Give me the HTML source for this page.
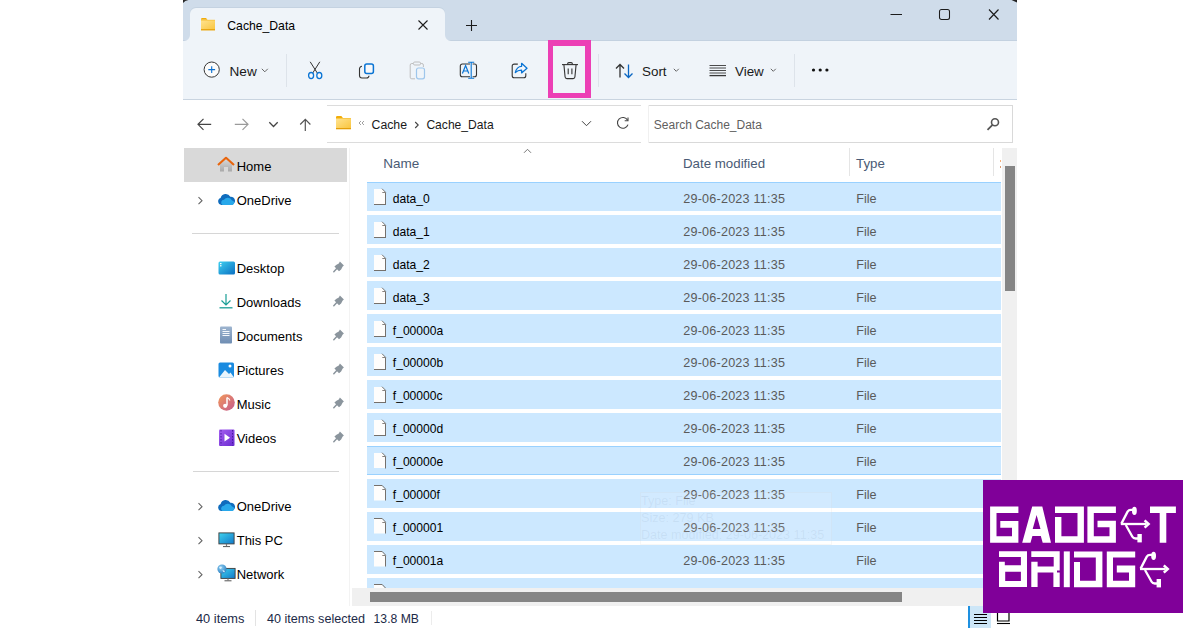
<!DOCTYPE html>
<html><head><meta charset="utf-8">
<style>
*{margin:0;padding:0;box-sizing:border-box}
html,body{width:1200px;height:628px;overflow:hidden;background:#fff;font-family:"Liberation Sans",sans-serif;color:#1a1a1a}
.a{position:absolute;white-space:nowrap}
svg{position:absolute;overflow:visible}
</style></head><body>
<div class="a" style="left:183px;top:0;width:834px;height:40px;background:#cfdcea"></div>
<div class="a" style="left:183px;top:40px;width:834px;height:59px;background:#eff4f9"></div>
<div class="a" style="left:183px;top:40px;width:834px;height:1px;background:#c3d1e0"></div>
<svg style="left:1011px;top:0px" width="7" height="3"><path d="M0.5 0 H6 V2.5 Z" fill="#222"/></svg>
<div class="a" style="left:183px;top:99px;width:834px;height:1px;background:#c9d4e0"></div>
<svg style="left:183px;top:0px" width="7" height="4"><path d="M0 0 H5.4 Q2 0.6 0 2.9Z" fill="#2a2a2a"/></svg>
<div class="a" style="left:190px;top:8px;width:255px;height:33px;background:#eff4f9;border-radius:6px 6px 0 0;box-shadow:0 -1px 0 #c4d2e1"></div>
<svg style="left:184px;top:35px" width="6" height="6"><path d="M0 6 L6 6 L6 0 A6 6 0 0 1 0 6Z" fill="#eff4f9"/></svg>
<svg style="left:445px;top:35px" width="6" height="6"><path d="M0 0 A6 6 0 0 0 6 6 L0 6Z" fill="#eff4f9"/></svg>
<svg style="left:201px;top:18px" width="15" height="13" viewBox="0 0 15 13">
<path d="M0 1.2 Q0 0 1.2 0 H5 L6.5 1.8 H0Z" fill="#f2ad0a"/>
<rect x="0" y="1.8" width="14" height="10.5" fill="#f7c33e"/>
<rect x="0" y="2.6" width="14" height="8.6" fill="url(#fg1)"/>
<rect x="0" y="11.2" width="14" height="1.1" fill="#e49e0a"/>
<defs><linearGradient id="fg1" x1="0" y1="0" x2="1" y2="1"><stop offset="0" stop-color="#ffe28e"/><stop offset="1" stop-color="#f9c640"/></linearGradient></defs>
</svg>
<div class="a" style="left:227.3px;top:19.57px;font-size:12.2px;line-height:12.2px;color:#000;">Cache_Data</div>
<svg style="left:417px;top:19px" width="12" height="12"><path d="M1.5 1.5 L10.5 10.5 M10.5 1.5 L1.5 10.5" stroke="#1c1c1c" stroke-width="1.1"/></svg>
<svg style="left:465px;top:19px" width="13" height="13"><path d="M6.5 1 V12 M1 6.5 H12" stroke="#1c1c1c" stroke-width="1.1"/></svg>
<svg style="left:890px;top:13px" width="13" height="3"><path d="M0.5 1.5 H12" stroke="#1c1c1c" stroke-width="1"/></svg>
<svg style="left:938px;top:8px" width="13" height="13"><rect x="1.5" y="1.5" width="10" height="10" rx="2" fill="none" stroke="#1c1c1c" stroke-width="1.05"/></svg>
<svg style="left:987px;top:8px" width="13" height="13"><path d="M2 1.5 L11.5 11.5 M11.5 1.5 L2 11.5" stroke="#1c1c1c" stroke-width="1.15"/></svg>
<svg style="left:203px;top:61px" width="18" height="18"><circle cx="8.7" cy="8.6" r="7.6" fill="#fbfbfb" stroke="#383838" stroke-width="1"/><path d="M8.7 5.2 V12 M5.3 8.6 H12.1" stroke="#0a6fd0" stroke-width="1.1"/></svg>
<div class="a" style="left:229.5px;top:64.89px;font-size:13.6px;line-height:13.6px;color:#1a1a1a;">New</div>
<svg style="left:261px;top:68px" width="8" height="5"><path d="M0.8 0.8 L3.8 3.8 L6.8 0.8" fill="none" stroke="#555" stroke-width="0.9"/></svg>
<div class="a" style="left:286px;top:54px;width:1px;height:33px;background:#dde3ea"></div>
<div class="a" style="left:598px;top:54px;width:1px;height:33px;background:#dde3ea"></div>
<div class="a" style="left:794px;top:54px;width:1px;height:33px;background:#dde3ea"></div>
<svg style="left:307px;top:61px" width="17" height="19"><path d="M3.2 0.8 L10.4 12.2 M12.8 0.8 L5.6 12.2" stroke="#333" stroke-width="1"/><ellipse cx="4.1" cy="14.6" rx="2.5" ry="3.1" fill="#f4f7fa" stroke="#0a74d4" stroke-width="1.3"/><ellipse cx="12.3" cy="14.6" rx="2.5" ry="3.1" fill="#f4f7fa" stroke="#0a74d4" stroke-width="1.3"/></svg>
<svg style="left:358px;top:62px" width="18" height="18"><rect x="6.8" y="1.9" width="8.6" height="9.6" rx="2" fill="#f7f8fa" stroke="#0a74d4" stroke-width="1.5"/><path d="M4 4.3 A2.5 2.5 0 0 0 1.5 6.8 V13.5 A2.5 2.5 0 0 0 4 16 H8.5 A2.5 2.5 0 0 0 11 13.7" fill="none" stroke="#333" stroke-width="1.1"/></svg>
<svg style="left:409px;top:61px" width="18" height="19"><path d="M4 2.5 H2.8 A1.6 1.6 0 0 0 1.2 4.1 V16.2 A1.6 1.6 0 0 0 2.8 17.8 H6" fill="none" stroke="#bdbdbd" stroke-width="1"/><rect x="4.5" y="1" width="7" height="3" rx="1.2" fill="none" stroke="#bdbdbd" stroke-width="1"/><path d="M11.5 2.5 H12.8 A1.6 1.6 0 0 1 14.4 4.1 V6" fill="none" stroke="#bdbdbd" stroke-width="1"/><rect x="7.5" y="7" width="8" height="10.8" rx="2" fill="none" stroke="#9ec6ec" stroke-width="1.2"/></svg>
<svg style="left:459px;top:61px" width="20" height="19"><path d="M11 3 H3.3 A2 2 0 0 0 1.3 5 V13.7 A2 2 0 0 0 3.3 15.7 H11" fill="none" stroke="#333" stroke-width="1.1"/><path d="M13.6 3 H15.5 A2 2 0 0 1 17.5 5 V13.7 A2 2 0 0 1 15.5 15.7 H13.6" fill="none" stroke="#333" stroke-width="1.1"/><path d="M3.4 12.4 L6.6 4.6 L9.8 12.4 M4.5 10 H8.7" fill="none" stroke="#0a74d4" stroke-width="1.2"/><path d="M12.2 1.3 V17.3 M9.2 1.3 H15.2 M9.2 17.3 H15.2" stroke="#0a74d4" stroke-width="1.1"/></svg>
<svg style="left:511px;top:62px" width="18" height="17"><path d="M6.8 2.1 H3.2 A2 2 0 0 0 1.2 4.1 V13.7 A2 2 0 0 0 3.2 15.7 H12.8 A2 2 0 0 0 14.8 13.7 V11.2" fill="none" stroke="#333" stroke-width="1.1"/><path d="M4.3 10.6 C5 7.2 7.5 4.3 10.6 4.3 V1.3 L16 6.2 L10.6 10.9 V8.2 C8 8.1 6 9 4.3 10.6Z" fill="#f6f8fb" stroke="#0a74d4" stroke-width="1.3" stroke-linejoin="round"/></svg>
<svg style="left:561px;top:61px" width="19" height="19"><path d="M1 3.6 H17" stroke="#333" stroke-width="1.1"/><path d="M6.6 3.5 V2.9 A1.3 1.3 0 0 1 7.9 1.6 H10.1 A1.3 1.3 0 0 1 11.4 2.9 V3.5" fill="none" stroke="#333" stroke-width="1.1"/><path d="M2.9 3.6 L4.1 16 A1.8 1.8 0 0 0 5.9 17.6 H12.1 A1.8 1.8 0 0 0 13.9 16 L15.1 3.6" fill="none" stroke="#333" stroke-width="1.1"/><path d="M7.2 7.6 V13.2 M10.9 7.6 V13.2" stroke="#333" stroke-width="1.1"/></svg>
<div class="a" style="left:548px;top:40px;width:43px;height:58px;border-style:solid;border-color:#ec3fb5;border-width:6px 6px 5px 5px"></div>
<svg style="left:615px;top:63px" width="20" height="16"><path d="M5 14.5 V1.5 M1 5.5 L5 1.5 L9 5.5" fill="none" stroke="#333" stroke-width="1.3"/><path d="M13.5 1.5 V14.5 M9.5 10.5 L13.5 14.5 L17.5 10.5" fill="none" stroke="#0a66c2" stroke-width="1.3"/></svg>
<div class="a" style="left:642px;top:65.06px;font-size:13.4px;line-height:13.4px;color:#1a1a1a;">Sort</div>
<svg style="left:673px;top:68px" width="8" height="5"><path d="M0.8 0.8 L3.3 3.3 L5.8 0.8" fill="none" stroke="#555" stroke-width="0.9"/></svg>
<svg style="left:709px;top:64px" width="18" height="13"><path d="M0.5 1.5 H17 M0.5 4 H17 M0.5 6.5 H17 M0.5 9 H17" stroke="#383838" stroke-width="0.9"/><path d="M0.5 11.6 H17" stroke="#383838" stroke-width="1.3"/></svg>
<div class="a" style="left:735px;top:65.06px;font-size:13.4px;line-height:13.4px;color:#1a1a1a;">View</div>
<svg style="left:770px;top:68px" width="8" height="5"><path d="M0.8 0.8 L3.3 3.3 L5.8 0.8" fill="none" stroke="#555" stroke-width="0.9"/></svg>
<svg style="left:810px;top:67px" width="20" height="6"><circle cx="3.5" cy="3" r="1.6" fill="#111"/><circle cx="10.2" cy="3" r="1.6" fill="#111"/><circle cx="16.9" cy="3" r="1.6" fill="#111"/></svg>
<svg style="left:196px;top:117px" width="17" height="15"><path d="M15.2 7.3 H2.2 M7.5 1.8 L2 7.3 L7.5 12.8" fill="none" stroke="#444" stroke-width="1.2"/></svg>
<svg style="left:233px;top:117px" width="17" height="15"><path d="M1.8 7.3 H14.8 M9.5 1.8 L15 7.3 L9.5 12.8" fill="none" stroke="#9a9a9a" stroke-width="1.2"/></svg>
<svg style="left:268px;top:121px" width="12" height="8"><path d="M1.3 1.3 L5.5 5.5 L9.7 1.3" fill="none" stroke="#444" stroke-width="1.3"/></svg>
<svg style="left:298px;top:117px" width="15" height="16"><path d="M7.3 14 V2.4 M2.2 7.5 L7.3 2.4 L12.4 7.5" fill="none" stroke="#555" stroke-width="1.2"/></svg>
<div class="a" style="left:327px;top:105px;width:314px;height:38px;border-top:1px solid #dcdcdc;border-bottom:1px solid #dcdcdc"></div>
<svg style="left:336px;top:116px" width="16" height="14" viewBox="0 0 15 13">
<path d="M0 1.2 Q0 0 1.2 0 H5 L6.5 1.8 H0Z" fill="#f2ad0a"/>
<rect x="0" y="1.8" width="14" height="10.5" fill="#f7c33e"/>
<rect x="0" y="2.6" width="14" height="8.6" fill="url(#fg1)"/>
<rect x="0" y="11.2" width="14" height="1.1" fill="#e49e0a"/>
</svg>
<svg style="left:358px;top:120px" width="7" height="6"><path d="M3 1 L1 3 L3 5 M6 1 L4 3 L6 5" fill="none" stroke="#888" stroke-width="0.8"/></svg>
<div class="a" style="left:371.5px;top:119.29px;font-size:12.3px;line-height:12.3px;color:#1a1a1a;">Cache</div>
<svg style="left:414px;top:121px" width="6" height="8"><path d="M1.2 1 L4.2 4 L1.2 7" fill="none" stroke="#444" stroke-width="1.1"/></svg>
<div class="a" style="left:426.4px;top:119.46px;font-size:12.1px;line-height:12.1px;color:#1a1a1a;">Cache_Data</div>
<svg style="left:581px;top:120px" width="12" height="8"><path d="M1 1.2 L5.5 5.7 L10 1.2" fill="none" stroke="#444" stroke-width="1"/></svg>
<svg style="left:616px;top:116px" width="14" height="15"><path d="M11.6 4.2 A5.4 5.4 0 1 0 12 8.6" fill="none" stroke="#444" stroke-width="1.1"/><path d="M12 1.5 V4.8 H8.7" fill="none" stroke="#444" stroke-width="1.1"/></svg>
<div class="a" style="left:648px;top:105px;width:365px;height:38px;border:1px solid #d9d9d9;border-left:none"></div>
<div class="a" style="left:648px;top:105px;width:1px;height:38px;background:#f0f0f0"></div>
<div class="a" style="left:653.8px;top:119.34px;font-size:12px;line-height:12px;color:#5f5f5f;">Search Cache_Data</div>
<svg style="left:986px;top:117px" width="15" height="15"><circle cx="9" cy="5.3" r="3.5" fill="none" stroke="#555" stroke-width="1.6"/><path d="M6.5 7.8 L1.5 12.8" stroke="#555" stroke-width="1.8"/></svg>
<div class="a" style="left:184px;top:148px;width:163px;height:34px;background:#d9d9d9"></div>
<div class="a" style="left:349px;top:148px;width:1px;height:458px;background:#f3f3f3"></div>
<div class="a" style="left:192px;top:233px;width:147px;height:1px;background:#d6d6d6"></div>
<div class="a" style="left:193px;top:471px;width:146px;height:1px;background:#d6d6d6"></div>
<svg style="left:217px;top:156.0px" width="19" height="17"><defs><linearGradient id="hg" x1="0" y1="0" x2="0" y2="1"><stop offset="0" stop-color="#d6d6d6"/><stop offset="1" stop-color="#a9a9a9"/></linearGradient></defs><path d="M3 8.5 L9 3.5 L15 8.5 V15.5 H11 V11 H7 V15.5 H3Z" fill="url(#hg)"/><path d="M1 9 L9 1.8 L17 9" fill="none" stroke="#e8650d" stroke-width="2.2" stroke-linejoin="round"/></svg>
<div class="a" style="left:236.7px;top:159.80px;font-size:13px;line-height:13px;color:#000;">Home</div>
<svg style="left:217px;top:193.3px" width="19" height="13"><path d="M4.5 12 A3.6 3.6 0 0 1 3.6 5 A5.2 5.2 0 0 1 13.3 3.8 A4 4 0 0 1 14.5 12Z" fill="#0f6cbd"/><path d="M5.5 12 A2.8 2.8 0 0 1 7 6.8 A4.5 4.5 0 0 1 15 7.5 A2.3 2.3 0 0 1 15.5 12Z" fill="#28a8ea"/></svg>
<div class="a" style="left:236.7px;top:193.80px;font-size:13px;line-height:13px;color:#000;">OneDrive</div>
<svg style="left:197px;top:195.8px" width="7" height="10"><path d="M1.5 1.2 L5 4.7 L1.5 8.2" fill="none" stroke="#666" stroke-width="1.1"/></svg>
<svg style="left:218px;top:261.0px" width="18" height="14"><defs><linearGradient id="dg" x1="0" y1="0" x2="1" y2="1"><stop offset="0" stop-color="#3fd0f0"/><stop offset="1" stop-color="#0a6fc2"/></linearGradient></defs><rect x="0.5" y="0.5" width="16.5" height="13" rx="1.5" fill="url(#dg)"/><rect x="2" y="2" width="1.5" height="1.2" fill="#fff"/><rect x="2" y="4.2" width="1.5" height="1.2" fill="#fff"/></svg>
<div class="a" style="left:236.7px;top:261.60px;font-size:13px;line-height:13px;color:#000;">Desktop</div>
<svg style="left:333px;top:261.0px" width="12" height="12"><path d="M6.9 0.6 L10.9 4.5 L9.7 5.5 L8.1 8.4 L6 10.3 L1.4 5.4 L3.5 3.8 L5.8 2.6 Z" fill="#8b959d"/><path d="M3.8 7.6 L0.8 10.8" stroke="#8b959d" stroke-width="1.5" stroke-linecap="round"/></svg>
<svg style="left:218px;top:293.0px" width="16" height="16"><path d="M8 1 V12 M3.5 7.5 L8 12 L12.5 7.5" fill="none" stroke="#1a9e96" stroke-width="1.2"/><path d="M1.5 14.8 H14.5" stroke="#1a9e96" stroke-width="1.3"/></svg>
<div class="a" style="left:236.7px;top:295.60px;font-size:13px;line-height:13px;color:#000;">Downloads</div>
<svg style="left:333px;top:295.0px" width="12" height="12"><path d="M6.9 0.6 L10.9 4.5 L9.7 5.5 L8.1 8.4 L6 10.3 L1.4 5.4 L3.5 3.8 L5.8 2.6 Z" fill="#8b959d"/><path d="M3.8 7.6 L0.8 10.8" stroke="#8b959d" stroke-width="1.5" stroke-linecap="round"/></svg>
<svg style="left:219px;top:326.0px" width="14" height="18"><defs><linearGradient id="docg" x1="0" y1="0" x2="0" y2="1"><stop offset="0" stop-color="#9db4cf"/><stop offset="1" stop-color="#6f8db3"/></linearGradient></defs><rect x="1" y="0.5" width="12" height="17" rx="1" fill="url(#docg)"/><path d="M3.5 3.5 H7 M3.5 5.5 H10.5 M3.5 7.5 H10.5 M3.5 9.5 H10.5" stroke="#f4f7fb" stroke-width="1"/></svg>
<div class="a" style="left:236.7px;top:329.60px;font-size:13px;line-height:13px;color:#000;">Documents</div>
<svg style="left:333px;top:329.0px" width="12" height="12"><path d="M6.9 0.6 L10.9 4.5 L9.7 5.5 L8.1 8.4 L6 10.3 L1.4 5.4 L3.5 3.8 L5.8 2.6 Z" fill="#8b959d"/><path d="M3.8 7.6 L0.8 10.8" stroke="#8b959d" stroke-width="1.5" stroke-linecap="round"/></svg>
<svg style="left:218px;top:362.0px" width="17" height="16"><rect x="0.5" y="0.5" width="15.5" height="15" rx="1.5" fill="#1a8be0"/><path d="M1 15.5 L7 8 L11 12 L12.5 10.5 L16 15.5Z" fill="#e8f4fc"/><circle cx="12" cy="4" r="1.5" fill="#fff"/></svg>
<div class="a" style="left:236.7px;top:363.60px;font-size:13px;line-height:13px;color:#000;">Pictures</div>
<svg style="left:333px;top:363.0px" width="12" height="12"><path d="M6.9 0.6 L10.9 4.5 L9.7 5.5 L8.1 8.4 L6 10.3 L1.4 5.4 L3.5 3.8 L5.8 2.6 Z" fill="#8b959d"/><path d="M3.8 7.6 L0.8 10.8" stroke="#8b959d" stroke-width="1.5" stroke-linecap="round"/></svg>
<svg style="left:218px;top:394.4px" width="18" height="18"><defs><linearGradient id="mg" x1="0" y1="0" x2="1" y2="1"><stop offset="0" stop-color="#f2995a"/><stop offset="1" stop-color="#c45a8e"/></linearGradient></defs><circle cx="8.5" cy="8.5" r="8.3" fill="url(#mg)"/><path d="M9 3.5 V11.5" stroke="#fff" stroke-width="1.5"/><path d="M9 3.5 Q11.5 4.5 11.8 6.5" fill="none" stroke="#fff" stroke-width="1.2"/><circle cx="7.2" cy="11.8" r="2.1" fill="#fff"/></svg>
<div class="a" style="left:236.7px;top:397.60px;font-size:13px;line-height:13px;color:#000;">Music</div>
<svg style="left:333px;top:397.0px" width="12" height="12"><path d="M6.9 0.6 L10.9 4.5 L9.7 5.5 L8.1 8.4 L6 10.3 L1.4 5.4 L3.5 3.8 L5.8 2.6 Z" fill="#8b959d"/><path d="M3.8 7.6 L0.8 10.8" stroke="#8b959d" stroke-width="1.5" stroke-linecap="round"/></svg>
<svg style="left:219px;top:428.6px" width="16" height="17"><defs><linearGradient id="vg" x1="0" y1="0" x2="1" y2="1"><stop offset="0" stop-color="#a45ff0"/><stop offset="1" stop-color="#6a2ad0"/></linearGradient></defs><rect x="0" y="0.5" width="15.5" height="16.5" rx="1" fill="url(#vg)"/><path d="M2 1 V16.5 M13.5 1 V16.5" stroke="#4a1aa0" stroke-width="1" stroke-dasharray="1.5 1.5"/><path d="M5.5 4.8 L11 8.7 L5.5 12.5Z" fill="#fff"/></svg>
<div class="a" style="left:236.7px;top:431.60px;font-size:13px;line-height:13px;color:#000;">Videos</div>
<svg style="left:333px;top:431.0px" width="12" height="12"><path d="M6.9 0.6 L10.9 4.5 L9.7 5.5 L8.1 8.4 L6 10.3 L1.4 5.4 L3.5 3.8 L5.8 2.6 Z" fill="#8b959d"/><path d="M3.8 7.6 L0.8 10.8" stroke="#8b959d" stroke-width="1.5" stroke-linecap="round"/></svg>
<svg style="left:217px;top:499.3px" width="19" height="13"><path d="M4.5 12 A3.6 3.6 0 0 1 3.6 5 A5.2 5.2 0 0 1 13.3 3.8 A4 4 0 0 1 14.5 12Z" fill="#0f6cbd"/><path d="M5.5 12 A2.8 2.8 0 0 1 7 6.8 A4.5 4.5 0 0 1 15 7.5 A2.3 2.3 0 0 1 15.5 12Z" fill="#28a8ea"/></svg>
<div class="a" style="left:236.7px;top:499.80px;font-size:13px;line-height:13px;color:#000;">OneDrive</div>
<svg style="left:197px;top:501.8px" width="7" height="10"><path d="M1.5 1.2 L5 4.7 L1.5 8.2" fill="none" stroke="#666" stroke-width="1.1"/></svg>
<svg style="left:218px;top:532.0px" width="18" height="17"><defs><linearGradient id="pcg" x1="0" y1="0" x2="1" y2="1"><stop offset="0" stop-color="#3fd2ee"/><stop offset="1" stop-color="#1178c8"/></linearGradient></defs><rect x="0.9" y="0.9" width="15.2" height="11" fill="url(#pcg)" stroke="#3c3c3c" stroke-width="0.9"/><path d="M8.5 12 V14" stroke="#777" stroke-width="1.2"/><path d="M5 14.6 H12" stroke="#555" stroke-width="1"/></svg>
<div class="a" style="left:236.7px;top:533.60px;font-size:13px;line-height:13px;color:#000;">This PC</div>
<svg style="left:197px;top:535.6px" width="7" height="10"><path d="M1.5 1.2 L5 4.7 L1.5 8.2" fill="none" stroke="#666" stroke-width="1.1"/></svg>
<svg style="left:217px;top:564.2px" width="19" height="19"><defs><linearGradient id="ng" x1="0" y1="0" x2="1" y2="1"><stop offset="0" stop-color="#3fd2ee"/><stop offset="1" stop-color="#1178c8"/></linearGradient><radialGradient id="glb" cx="0.4" cy="0.35" r="0.7"><stop offset="0" stop-color="#8fd0f5"/><stop offset="1" stop-color="#2a7fc0"/></radialGradient></defs><rect x="3.9" y="4.4" width="14.2" height="10" fill="url(#ng)" stroke="#3c3c3c" stroke-width="0.9"/><path d="M11 14.5 V16.2" stroke="#777" stroke-width="1.2"/><path d="M7.5 16.8 H14.5" stroke="#555" stroke-width="1"/><circle cx="5" cy="5" r="4.6" fill="url(#glb)"/><path d="M2 3 Q3.5 1.8 5 3 L4 5 Q2.5 5.5 2 3Z M5.5 6 Q7.5 6 8 8 Q6 9 5.5 6Z" fill="#e8f6ff" opacity="0.85"/></svg>
<div class="a" style="left:236.7px;top:567.60px;font-size:13px;line-height:13px;color:#000;">Network</div>
<svg style="left:197px;top:569.6px" width="7" height="10"><path d="M1.5 1.2 L5 4.7 L1.5 8.2" fill="none" stroke="#666" stroke-width="1.1"/></svg>
<div class="a" style="left:383.3px;top:156.97px;font-size:13.5px;line-height:13.5px;color:#4a5b75;">Name</div>
<svg style="left:523px;top:148px" width="10" height="6"><path d="M1 4.8 L4.5 1.3 L8 4.8" fill="none" stroke="#666" stroke-width="0.9"/></svg>
<div class="a" style="left:683px;top:157.14px;font-size:13.3px;line-height:13.3px;color:#4a5b75;">Date modified</div>
<div class="a" style="left:849px;top:148px;width:1px;height:28px;background:#e5e5e5"></div>
<div class="a" style="left:856px;top:157.14px;font-size:13.3px;line-height:13.3px;color:#4a5b75;">Type</div>
<div class="a" style="left:993px;top:148px;width:1px;height:28px;background:#e5e5e5"></div>
<div class="a" style="left:367px;top:182px;width:634px;height:29px;background:#cce8ff"></div>
<div class="a" style="left:367px;top:182px;width:634px;height:1px;background:#99d1ff"></div>
<svg style="left:373px;top:188px" width="15" height="18"><path d="M1 1 H9 L12 4 V16 H1Z" fill="#fefdfc"/><path d="M12.5 4.5 V17 M1 16.5 H13" stroke="#75706b" stroke-width="1"/><path d="M9 0.7 L12.7 4.4" stroke="#7a7570" stroke-width="1"/><path d="M9.3 4.5 H12.5" stroke="#7a7570" stroke-width="0.9"/></svg>
<div class="a" style="left:392.8px;top:192.86px;font-size:12.1px;line-height:12.1px;color:#000;">data_0</div>
<div class="a" style="left:683.2px;top:192.93px;font-size:12.6px;line-height:12.6px;color:#5a5a5a;letter-spacing:0.22px">29-06-2023 11:35</div>
<div class="a" style="left:856.2px;top:192.93px;font-size:12.6px;line-height:12.6px;color:#5a5a5a;">File</div>
<div class="a" style="left:367px;top:215px;width:634px;height:29px;background:#cce8ff"></div>
<svg style="left:373px;top:221px" width="15" height="18"><path d="M1 1 H9 L12 4 V16 H1Z" fill="#fefdfc"/><path d="M12.5 4.5 V17 M1 16.5 H13" stroke="#75706b" stroke-width="1"/><path d="M9 0.7 L12.7 4.4" stroke="#7a7570" stroke-width="1"/><path d="M9.3 4.5 H12.5" stroke="#7a7570" stroke-width="0.9"/></svg>
<div class="a" style="left:392.8px;top:225.77px;font-size:12.1px;line-height:12.1px;color:#000;">data_1</div>
<div class="a" style="left:683.2px;top:225.84px;font-size:12.6px;line-height:12.6px;color:#5a5a5a;letter-spacing:0.22px">29-06-2023 11:35</div>
<div class="a" style="left:856.2px;top:225.84px;font-size:12.6px;line-height:12.6px;color:#5a5a5a;">File</div>
<div class="a" style="left:367px;top:248px;width:634px;height:29px;background:#cce8ff"></div>
<svg style="left:373px;top:254px" width="15" height="18"><path d="M1 1 H9 L12 4 V16 H1Z" fill="#fefdfc"/><path d="M12.5 4.5 V17 M1 16.5 H13" stroke="#75706b" stroke-width="1"/><path d="M9 0.7 L12.7 4.4" stroke="#7a7570" stroke-width="1"/><path d="M9.3 4.5 H12.5" stroke="#7a7570" stroke-width="0.9"/></svg>
<div class="a" style="left:392.8px;top:258.68px;font-size:12.1px;line-height:12.1px;color:#000;">data_2</div>
<div class="a" style="left:683.2px;top:258.75px;font-size:12.6px;line-height:12.6px;color:#5a5a5a;letter-spacing:0.22px">29-06-2023 11:35</div>
<div class="a" style="left:856.2px;top:258.75px;font-size:12.6px;line-height:12.6px;color:#5a5a5a;">File</div>
<div class="a" style="left:367px;top:281px;width:634px;height:29px;background:#cce8ff"></div>
<svg style="left:373px;top:287px" width="15" height="18"><path d="M1 1 H9 L12 4 V16 H1Z" fill="#fefdfc"/><path d="M12.5 4.5 V17 M1 16.5 H13" stroke="#75706b" stroke-width="1"/><path d="M9 0.7 L12.7 4.4" stroke="#7a7570" stroke-width="1"/><path d="M9.3 4.5 H12.5" stroke="#7a7570" stroke-width="0.9"/></svg>
<div class="a" style="left:392.8px;top:291.59px;font-size:12.1px;line-height:12.1px;color:#000;">data_3</div>
<div class="a" style="left:683.2px;top:291.66px;font-size:12.6px;line-height:12.6px;color:#5a5a5a;letter-spacing:0.22px">29-06-2023 11:35</div>
<div class="a" style="left:856.2px;top:291.66px;font-size:12.6px;line-height:12.6px;color:#5a5a5a;">File</div>
<div class="a" style="left:367px;top:314px;width:634px;height:29px;background:#cce8ff"></div>
<svg style="left:373px;top:320px" width="15" height="18"><path d="M1 1 H9 L12 4 V16 H1Z" fill="#fefdfc"/><path d="M12.5 4.5 V17 M1 16.5 H13" stroke="#75706b" stroke-width="1"/><path d="M9 0.7 L12.7 4.4" stroke="#7a7570" stroke-width="1"/><path d="M9.3 4.5 H12.5" stroke="#7a7570" stroke-width="0.9"/></svg>
<div class="a" style="left:392.8px;top:324.50px;font-size:12.1px;line-height:12.1px;color:#000;">f_00000a</div>
<div class="a" style="left:683.2px;top:324.57px;font-size:12.6px;line-height:12.6px;color:#5a5a5a;letter-spacing:0.22px">29-06-2023 11:35</div>
<div class="a" style="left:856.2px;top:324.57px;font-size:12.6px;line-height:12.6px;color:#5a5a5a;">File</div>
<div class="a" style="left:367px;top:347px;width:634px;height:29px;background:#cce8ff"></div>
<svg style="left:373px;top:353px" width="15" height="18"><path d="M1 1 H9 L12 4 V16 H1Z" fill="#fefdfc"/><path d="M12.5 4.5 V17 M1 16.5 H13" stroke="#75706b" stroke-width="1"/><path d="M9 0.7 L12.7 4.4" stroke="#7a7570" stroke-width="1"/><path d="M9.3 4.5 H12.5" stroke="#7a7570" stroke-width="0.9"/></svg>
<div class="a" style="left:392.8px;top:357.41px;font-size:12.1px;line-height:12.1px;color:#000;">f_00000b</div>
<div class="a" style="left:683.2px;top:357.48px;font-size:12.6px;line-height:12.6px;color:#5a5a5a;letter-spacing:0.22px">29-06-2023 11:35</div>
<div class="a" style="left:856.2px;top:357.48px;font-size:12.6px;line-height:12.6px;color:#5a5a5a;">File</div>
<div class="a" style="left:367px;top:380px;width:634px;height:29px;background:#cce8ff"></div>
<svg style="left:373px;top:386px" width="15" height="18"><path d="M1 1 H9 L12 4 V16 H1Z" fill="#fefdfc"/><path d="M12.5 4.5 V17 M1 16.5 H13" stroke="#75706b" stroke-width="1"/><path d="M9 0.7 L12.7 4.4" stroke="#7a7570" stroke-width="1"/><path d="M9.3 4.5 H12.5" stroke="#7a7570" stroke-width="0.9"/></svg>
<div class="a" style="left:392.8px;top:390.32px;font-size:12.1px;line-height:12.1px;color:#000;">f_00000c</div>
<div class="a" style="left:683.2px;top:390.39px;font-size:12.6px;line-height:12.6px;color:#5a5a5a;letter-spacing:0.22px">29-06-2023 11:35</div>
<div class="a" style="left:856.2px;top:390.39px;font-size:12.6px;line-height:12.6px;color:#5a5a5a;">File</div>
<div class="a" style="left:367px;top:413px;width:634px;height:29px;background:#cce8ff"></div>
<svg style="left:373px;top:419px" width="15" height="18"><path d="M1 1 H9 L12 4 V16 H1Z" fill="#fefdfc"/><path d="M12.5 4.5 V17 M1 16.5 H13" stroke="#75706b" stroke-width="1"/><path d="M9 0.7 L12.7 4.4" stroke="#7a7570" stroke-width="1"/><path d="M9.3 4.5 H12.5" stroke="#7a7570" stroke-width="0.9"/></svg>
<div class="a" style="left:392.8px;top:423.23px;font-size:12.1px;line-height:12.1px;color:#000;">f_00000d</div>
<div class="a" style="left:683.2px;top:423.30px;font-size:12.6px;line-height:12.6px;color:#5a5a5a;letter-spacing:0.22px">29-06-2023 11:35</div>
<div class="a" style="left:856.2px;top:423.30px;font-size:12.6px;line-height:12.6px;color:#5a5a5a;">File</div>
<div class="a" style="left:367px;top:446px;width:634px;height:29px;background:#cce8ff"></div>
<div class="a" style="left:367px;top:446px;width:634px;height:29px;border-top:1px solid #99d1ff;border-bottom:1px solid #99d1ff"></div>
<svg style="left:373px;top:452px" width="15" height="18"><path d="M1 1 H9 L12 4 V16 H1Z" fill="#fefdfc"/><path d="M12.5 4.5 V16.5" stroke="#75706b" stroke-width="1"/><path d="M9 0.7 L12.7 4.4" stroke="#7a7570" stroke-width="1"/><path d="M9.3 4.5 H12.5" stroke="#7a7570" stroke-width="0.9"/></svg>
<div class="a" style="left:392.8px;top:456.14px;font-size:12.1px;line-height:12.1px;color:#000;">f_00000e</div>
<div class="a" style="left:683.2px;top:456.21px;font-size:12.6px;line-height:12.6px;color:#5a5a5a;letter-spacing:0.22px">29-06-2023 11:35</div>
<div class="a" style="left:856.2px;top:456.21px;font-size:12.6px;line-height:12.6px;color:#5a5a5a;">File</div>
<div class="a" style="left:367px;top:479px;width:634px;height:29px;background:#cce8ff"></div>
<svg style="left:373px;top:485px" width="15" height="18"><path d="M1 1 H9 L12 4 V15.5 H1Z" fill="#fefdfc"/><path d="M12.5 4.5 V15.5" stroke="#75706b" stroke-width="1"/><path d="M1 0.5 H9.2 L12.7 4.2" fill="none" stroke="#75706b" stroke-width="1"/><path d="M9.3 4.5 H12.5" stroke="#7a7570" stroke-width="0.9"/></svg>
<div class="a" style="left:392.8px;top:489.05px;font-size:12.1px;line-height:12.1px;color:#000;">f_00000f</div>
<div class="a" style="left:683.2px;top:489.12px;font-size:12.6px;line-height:12.6px;color:#5a5a5a;letter-spacing:0.22px">29-06-2023 11:35</div>
<div class="a" style="left:856.2px;top:489.12px;font-size:12.6px;line-height:12.6px;color:#5a5a5a;">File</div>
<div class="a" style="left:367px;top:512px;width:634px;height:29px;background:#cce8ff"></div>
<svg style="left:373px;top:518px" width="15" height="18"><path d="M1 1 H9 L12 4 V15.5 H1Z" fill="#fefdfc"/><path d="M12.5 4.5 V15.5" stroke="#75706b" stroke-width="1"/><path d="M1 0.5 H9.2 L12.7 4.2" fill="none" stroke="#75706b" stroke-width="1"/><path d="M9.3 4.5 H12.5" stroke="#7a7570" stroke-width="0.9"/></svg>
<div class="a" style="left:392.8px;top:521.96px;font-size:12.1px;line-height:12.1px;color:#000;">f_000001</div>
<div class="a" style="left:683.2px;top:522.03px;font-size:12.6px;line-height:12.6px;color:#5a5a5a;letter-spacing:0.22px">29-06-2023 11:35</div>
<div class="a" style="left:856.2px;top:522.03px;font-size:12.6px;line-height:12.6px;color:#5a5a5a;">File</div>
<div class="a" style="left:367px;top:545px;width:634px;height:29px;background:#cce8ff"></div>
<svg style="left:373px;top:551px" width="15" height="18"><path d="M1 1 H9 L12 4 V15.5 H1Z" fill="#fefdfc"/><path d="M12.5 4.5 V15.5" stroke="#75706b" stroke-width="1"/><path d="M1 0.5 H9.2 L12.7 4.2" fill="none" stroke="#75706b" stroke-width="1"/><path d="M9.3 4.5 H12.5" stroke="#7a7570" stroke-width="0.9"/></svg>
<div class="a" style="left:392.8px;top:554.87px;font-size:12.1px;line-height:12.1px;color:#000;">f_00001a</div>
<div class="a" style="left:683.2px;top:554.94px;font-size:12.6px;line-height:12.6px;color:#5a5a5a;letter-spacing:0.22px">29-06-2023 11:35</div>
<div class="a" style="left:856.2px;top:554.94px;font-size:12.6px;line-height:12.6px;color:#5a5a5a;">File</div>
<div class="a" style="left:367px;top:578px;width:634px;height:10px;background:#cce8ff"></div>
<svg style="left:373px;top:584px" width="15" height="18"><path d="M1 1 H9 L12 4 V15.5 H1Z" fill="#fefdfc"/><path d="M12.5 4.5 V15.5" stroke="#75706b" stroke-width="1"/><path d="M1 0.5 H9.2 L12.7 4.2" fill="none" stroke="#75706b" stroke-width="1"/><path d="M9.3 4.5 H12.5" stroke="#7a7570" stroke-width="0.9"/></svg>
<div class="a" style="left:640px;top:492px;width:192px;height:53px;background:rgba(255,255,255,0.12);border:1px solid rgba(200,200,200,0.15)"></div>
<div class="a" style="left:641px;top:495.33px;font-size:12.6px;line-height:12.6px;color:rgba(120,140,170,0.12);">Type: File</div>
<div class="a" style="left:641px;top:512.33px;font-size:12.6px;line-height:12.6px;color:rgba(120,140,170,0.12);">Size: 279 KB</div>
<div class="a" style="left:641px;top:529.33px;font-size:12.6px;line-height:12.6px;color:rgba(120,140,170,0.12);">Date modified: 29-06-2023 11:35</div>
<div class="a" style="left:1000px;top:160px;width:1px;height:2px;background:#f7b07a"></div>
<div class="a" style="left:1000px;top:166px;width:1px;height:1.5px;background:#d99a70"></div>
<div class="a" style="left:1002px;top:148px;width:15px;height:440px;background:#f0f0f0"></div>
<div class="a" style="left:1005px;top:166px;width:10px;height:125px;background:#858585"></div>
<div class="a" style="left:352px;top:588px;width:665px;height:18px;background:#f0f0f0"></div>
<div class="a" style="left:370px;top:592px;width:532px;height:10px;background:#858585"></div>
<div class="a" style="left:196px;top:612.66px;font-size:12.8px;line-height:12.8px;color:#1c2a48;">40 items</div>
<div class="a" style="left:255px;top:610px;width:1px;height:16px;background:#e3e3e3"></div>
<div class="a" style="left:267px;top:612.83px;font-size:12.6px;line-height:12.6px;color:#1c2a48;">40 items selected</div>
<div class="a" style="left:373.6px;top:613.17px;font-size:12.2px;line-height:12.2px;color:#1c2a48;">13.8 MB</div>
<div class="a" style="left:431px;top:611px;width:1px;height:14px;background:#ececec"></div>
<div class="a" style="left:968px;top:606px;width:23px;height:22px;background:#cde6f7"></div>
<div class="a" style="left:968px;top:606px;width:1.5px;height:22px;background:#1e90e0"></div>
<svg style="left:974px;top:613px" width="14" height="13"><path d="M0 1.5 H13 M0 4.5 H13 M0 7.5 H13 M0 10.5 H13" stroke="#000" stroke-width="1.2"/></svg>
<svg style="left:996px;top:606px" width="16" height="22"><path d="M1.5 0 V15 H13 V0" fill="none" stroke="#000" stroke-width="1.2"/><path d="M1 17.5 H14" stroke="#000" stroke-width="1.1"/></svg>
<svg style="left:983px;top:480px" width="200" height="133" viewBox="0 0 200 133">
<rect x="0" y="0" width="200" height="133" fill="#800099"/>
<g fill="#fff" fill-rule="evenodd">
<path d="M7.1 26.5 H35.4 V33 H13.5 V56.3 H29 V47.8 H17.3 V41 H35.4 V62.7 H7.1Z"/>
<path d="M39.2 62.7 L49.2 26.5 H59.3 L68 62.7 H59.7 L57.8 55.9 H49.4 L47.5 62.7Z M53.6 34.9 L49.7 48.9 H57.5Z"/>
<path d="M72 26.5 H100.9 V62.7 H72 V37 H78.4 V56.3 H94.5 V33 H72Z"/>
<path d="M104.4 26.5 H132.9 V33 H110.8 V56.3 H126.5 V47.3 H114.5 V40.8 H132.9 V62.7 H104.4Z"/>
<path d="M167 26.4 H192.9 V33 H183.3 V62.7 H176.7 V33 H167Z"/>
<path d="M16 71.2 H44 V107 H16 V81.7 H21.8 V85.2 H37.9 V77.1 H16Z M22.2 91.8 V100.9 H37.9 V91.8Z"/>
<path d="M48.3 71.2 H76.7 V90.4 H74 V92.5 H76.7 V107 H70.4 V92.5 H54.6 V107 H48.3 V81.7 H54.6 V86.6 H70.7 V77.1 H48.3Z"/>
<path d="M80.8 71.4 H86.8 V107.2 H80.8Z"/>
<path d="M91 71.4 H119.4 V107.2 H91 V81.9 H97 V100.7 H112.8 V77.5 H91Z"/>
<path d="M123.8 71.4 H152.2 V77.5 H130 V100.7 H146 V92.4 H133.8 V85.4 H152.2 V107.2 H123.8Z"/>
</g>
<g id="usb1" fill="none" stroke="#fff" stroke-width="2.3" stroke-linejoin="round">
<path d="M137.8 44 H163.5"/>
<path d="M161.6 40.3 L165.6 44 L161.6 47.7" stroke-width="2.5" stroke-linejoin="miter"/>
<path d="M138.4 43.6 L144.6 31.6 Q145.6 29.9 148 29.9 H150.5"/>
<path d="M142.8 45 L149.4 56.8 Q150.4 58.5 152.6 58.5 H155.5"/>
<ellipse cx="151.4" cy="30.9" rx="2.4" ry="4.1" fill="#fff" stroke="none"/>
<rect x="154.4" y="54" width="4.4" height="8.4" fill="#fff" stroke="none"/>
</g>
<use href="#usb1" transform="translate(19.2,45)"/>
</svg>
</body></html>
